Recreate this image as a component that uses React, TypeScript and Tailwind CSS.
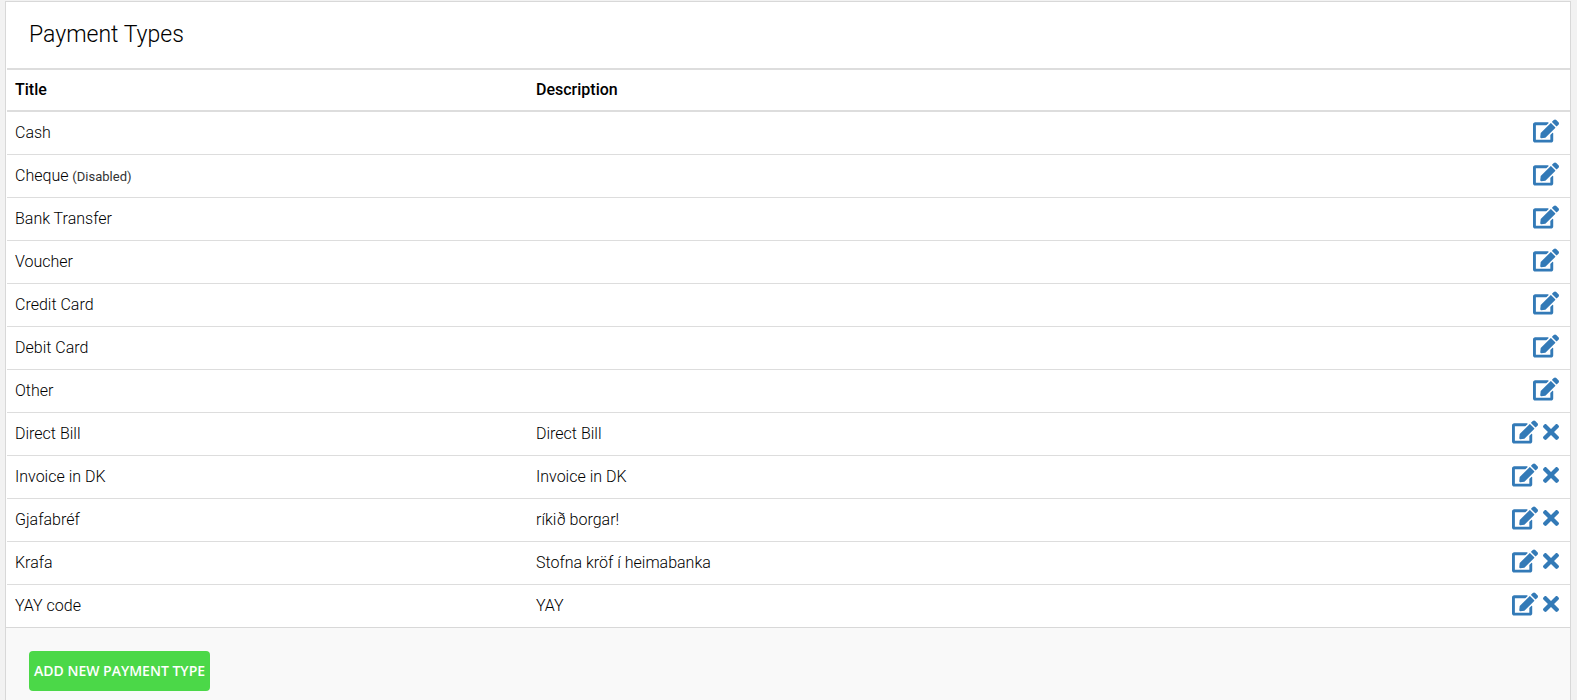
import { FaEdit, FaTimes } from "react-icons/fa"

type PaymentType = {
    title: string;
    description?: string;
    disabled?: boolean;
    removable?: boolean;
}

const paymentTypes: PaymentType[] = [
    { title: "Cash" },
    { title: "Cheque", disabled: true },
    { title: "Bank Transfer" },
    { title: "Voucher" },
    { title: "Credit Card" },
    { title: "Debit Card" },
    { title: "Other" },
    { title: "Direct Bill", description: "Direct Bill", removable: true },
    { title: "Invoice in DK", description: "Invoice in DK", removable: true },
    { title: "Gjafabréf", description: "ríkið borgar!", removable: true },
    { title: "Krafa", description: "Stofna kröf í heimabanka", removable: true },
    { title: "YAY code", description: "YAY", removable: true },
]

function PaymentRow({ item }: { item: PaymentType }) {
    return (
        <tr className="h-[43px] border-t border-[#ddd] first:border-t-0">
            <td className="px-2">
                {item.title} {item.disabled && <small className="text-[13px] font-normal text-[#333]">(Disabled)</small>}
            </td>
            <td className="px-2">{item.description}</td>
            <td className="pb-[3px] pl-2 pr-[11px]">
                <div className="flex justify-end gap-[5px] text-[#337ab7]">
                    <a href="#edit" aria-label={`Edit ${item.title}`}>
                        <FaEdit className="h-6 w-[26px]" />
                    </a>
                    {item.removable && (
                        <a href="#delete" aria-label={`Delete ${item.title}`}>
                            <FaTimes className="h-6 w-4" />
                        </a>
                    )}
                </div>
            </td>
        </tr>
    )
}

export default function App() {
    return (
        <div className="flex min-h-screen flex-col bg-[#f2f2f2] pl-[5px] pr-[6px] pt-px font-['Roboto',sans-serif] text-base font-light text-black">
            <section className="flex flex-1 flex-col border-x border-t border-[#d8d8d8] bg-white">
                <h1 className="px-[23px] py-4 text-[23px] leading-[34px]">Payment Types</h1>

                <div className="pl-px">
                    <table className="w-full table-fixed border-collapse text-left">
                        <thead>
                            <tr className="h-[42px] border-y-2 border-[#ddd]">
                                <th scope="col" className="px-2 font-medium">Title</th>
                                <th scope="col" className="px-2 font-medium">Description</th>
                                <td />
                            </tr>
                        </thead>
                        <tbody>
                            {paymentTypes.map((item) => (
                                <PaymentRow key={item.title} item={item} />
                            ))}
                        </tbody>
                    </table>
                </div>

                <footer className="flex-1 border-t border-[#d8d8d8] bg-[#f9f9f9] px-[23px] pb-2 pt-[23px]">
                    <button
                        type="button"
                        className="h-10 rounded bg-[#4bd848] px-[5px] font-['Open_Sans',sans-serif] text-sm font-semibold uppercase text-white"
                    >
                        Add new payment type
                    </button>
                </footer>
            </section>
        </div>
    )
}
